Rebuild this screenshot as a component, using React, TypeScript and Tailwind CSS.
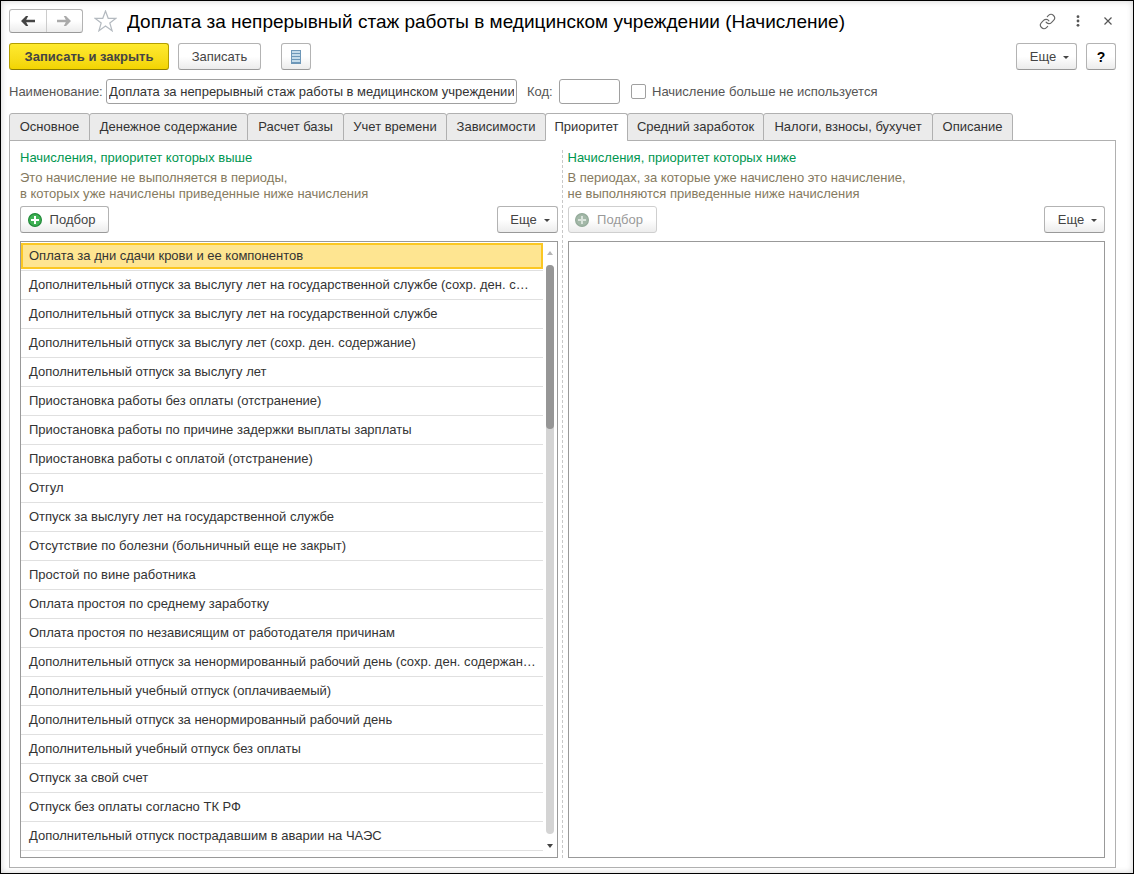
import { useState } from "react";
import type { ReactNode } from "react";
import clsx from "clsx";
import { Link } from "lucide-react";

const TABS = [
  { title: "Основное", width: "w-[81px]" },
  { title: "Денежное содержание", width: "w-[159px]" },
  { title: "Расчет базы", width: "w-[97px]" },
  { title: "Учет времени", width: "w-[104px]" },
  { title: "Зависимости", width: "w-[100px]" },
  { title: "Приоритет", width: "w-[83px]" },
  { title: "Средний заработок", width: "w-[137px]" },
  { title: "Налоги, взносы, бухучет", width: "w-[170px]" },
  { title: "Описание", width: "w-[81px]" },
];

const ACCRUALS = [
  "Оплата за дни сдачи крови и ее компонентов",
  "Дополнительный отпуск за выслугу лет на государственной службе (сохр. ден. с…",
  "Дополнительный отпуск за выслугу лет на государственной службе",
  "Дополнительный отпуск за выслугу лет (сохр. ден. содержание)",
  "Дополнительный отпуск за выслугу лет",
  "Приостановка работы без оплаты (отстранение)",
  "Приостановка работы по причине задержки выплаты зарплаты",
  "Приостановка работы с оплатой (отстранение)",
  "Отгул",
  "Отпуск за выслугу лет на государственной службе",
  "Отсутствие по болезни (больничный еще не закрыт)",
  "Простой по вине работника",
  "Оплата простоя по среднему заработку",
  "Оплата простоя по независящим от работодателя причинам",
  "Дополнительный отпуск за ненормированный рабочий день (сохр. ден. содержан…",
  "Дополнительный учебный отпуск (оплачиваемый)",
  "Дополнительный отпуск за ненормированный рабочий день",
  "Дополнительный учебный отпуск без оплаты",
  "Отпуск за свой счет",
  "Отпуск без оплаты согласно ТК РФ",
  "Дополнительный отпуск пострадавшим в аварии на ЧАЭС",
];

type ButtonProps = {
  children: ReactNode;
  className?: string;
  disabled?: boolean;
  label?: string;
};

function Button({ children, className, disabled, label }: ButtonProps) {
  return (
    <button
      type="button"
      disabled={disabled}
      aria-label={label}
      className={clsx(
        "flex h-[27px] shrink-0 items-center justify-center rounded-[3px] border bg-linear-to-b from-white from-50% to-[#ececec]",
        disabled
          ? "border-[#cfcfcf] text-[#999999]"
          : "border-[#b3b3b3] border-b-[#999999] text-[#444444]",
        className
      )}
    >
      {children}
    </button>
  );
}

function MoreButton() {
  return (
    <Button className="w-[61px] gap-[7px] pl-[6px]">
      Еще
      <svg width="6" height="3" viewBox="0 0 6 3" className="mt-[2px]" aria-hidden="true">
        <path d="M0 0h6L3 3z" fill="#444444" />
      </svg>
    </Button>
  );
}

function PickButton({ disabled }: { disabled?: boolean }) {
  return (
    <Button disabled={disabled} className="w-[89px] gap-2 pr-[6px]">
      <svg width="14" height="14" viewBox="0 0 14 14" aria-hidden="true">
        <circle
          cx="7"
          cy="7"
          r="6.4"
          fill={disabled ? "#a3b8a8" : "#3fb254"}
          stroke={disabled ? "#94ab9a" : "#238a3a"}
          strokeWidth="1.2"
        />
        <path d="M7 3v8M3 7h8" stroke={disabled ? "#d9e3db" : "#ffffff"} strokeWidth="2" />
      </svg>
      Подбор
    </Button>
  );
}

function ColumnHeader({ title, lines, disabled }: { title: string; lines: string[]; disabled?: boolean }) {
  return (
    <>
      <h2 className="leading-4 text-[#009650]">{title}</h2>
      <p className="mt-1 leading-4 text-[#857a60]">
        {lines.map((line) => (
          <span key={line} className="block">
            {line}
          </span>
        ))}
      </p>
      <div className="mt-1 mb-2 flex justify-between">
        <PickButton disabled={disabled} />
        <MoreButton />
      </div>
    </>
  );
}

/* Static scroll strip: arrow, track with thumb, arrow */
function ScrollStrip() {
  return (
    <div className="flex w-[14px] shrink-0 flex-col items-center py-[9px]">
      <svg width="6" height="4" viewBox="0 0 6 4" aria-hidden="true">
        <path d="M0 4h6L3 0z" fill="#b5b5b5" />
      </svg>
      <div className="my-[10px] w-2 flex-1 rounded-full bg-[#d4d4d4]">
        <div className="h-[164px] rounded-full bg-[#969696]" />
      </div>
      <svg width="6" height="4" viewBox="0 0 6 4" aria-hidden="true">
        <path d="M0 0h6L3 4z" fill="#444444" />
      </svg>
    </div>
  );
}

export default function App() {
  const [activeTab, setActiveTab] = useState("Приоритет");
  const [selected, setSelected] = useState(0);

  return (
    <main className="flex min-h-screen flex-col border border-black bg-white pt-2 pr-[17px] pb-[5px] pl-2 font-['Liberation_Sans',Arial,sans-serif] text-[13px] text-[#333333] shadow-[inset_0_0_6px_#00000030]">
      {/* Title bar */}
      <header className="flex h-6 items-center">
        <div className="flex h-6 w-[74px] shrink-0 rounded-[3px] border border-[#b3b3b3] border-b-[#999999] bg-linear-to-b from-white from-50% to-[#ececec]">
          <button type="button" aria-label="Назад" className="flex flex-1 items-center justify-center border-r border-[#cccccc]">
            <svg width="14" height="10" viewBox="0 0 14 10" fill="#444444" aria-hidden="true">
              <path d="M0 5L5 0h2.200L5.200 3.800H14v2.400H5.200L7.200 10H5z" />
            </svg>
          </button>
          <button type="button" aria-label="Вперед" className="flex flex-1 items-center justify-center">
            <svg width="14" height="10" viewBox="0 0 14 10" fill="#aaaaaa" aria-hidden="true">
              <path d="M14 5L9 0H6.800l2 3.800H0v2.400h8.800l-2 3.800H9z" />
            </svg>
          </button>
        </div>
        <button type="button" aria-label="В избранное" className="ml-[11px] shrink-0">
          <svg width="23" height="22" viewBox="0 0 23 22" fill="none" stroke="#b4bac0" strokeWidth="1.200" aria-hidden="true">
            <path d="M11.500 1l2.700 7.300h7.800l-6.200 4.700 2.300 7.800-6.600-4.700-6.600 4.700 2.300-7.800L1 8.300h7.800z" />
          </svg>
        </button>
        <h1 className="ml-[10px] flex-1 truncate pt-0.5 text-[19px] leading-6 text-black">
          Доплата за непрерывный стаж работы в медицинском учреждении (Начисление)
        </h1>
        <div className="flex shrink-0 items-center">
          <button type="button" aria-label="Ссылка">
            <Link size={17} strokeWidth={1.6} className="text-[#666666]" />
          </button>
          <button type="button" aria-label="Меню" className="ml-5">
            <svg width="4" height="12" viewBox="0 0 4 12" fill="#555555" aria-hidden="true">
              <circle cx="2" cy="1.700" r="1.400" />
              <circle cx="2" cy="6" r="1.400" />
              <circle cx="2" cy="10.300" r="1.400" />
            </svg>
          </button>
          <button type="button" aria-label="Закрыть" className="mr-1 ml-6">
            <svg width="8" height="8" viewBox="0 0 8 8" stroke="#555555" strokeWidth="1.200" aria-hidden="true">
              <path d="M.5.5l7 7M7.500.5l-7 7" />
            </svg>
          </button>
        </div>
      </header>

      {/* Command bar */}
      <div className="mt-[10px] flex items-center">
        <button
          type="button"
          className="h-[27px] w-40 rounded-[3px] border border-[#b39e00] border-b-[#8f7e00] bg-linear-to-b from-[#ffea2e] to-[#f2d400] font-bold text-[#444444]"
        >
          Записать и закрыть
        </button>
        <Button className="ml-[9px] w-[83px]">Записать</Button>
        <Button className="ml-5 w-[30px]" label="Список">
          <svg width="10" height="14" viewBox="0 0 10 14" aria-hidden="true">
            <path d="M0 0h10v14H0z" fill="#6d97b8" />
            <path d="M1 2h8M1 5h8M1 8h8M1 11h8" stroke="#c4dbea" strokeWidth="2" />
          </svg>
        </Button>
        <div className="ml-auto flex gap-[9px]">
          <MoreButton />
          <Button className="w-[30px] text-sm font-bold text-black">?</Button>
        </div>
      </div>

      {/* Attributes */}
      <div className="mt-[9px] flex items-center text-[#555555]">
        <label htmlFor="name" className="w-[97px] shrink-0">
          Наименование:
        </label>
        <input
          id="name"
          className="h-[25px] w-[411px] rounded-[3px] border border-[#a0a0a0] px-[2px] text-[#333333]"
          defaultValue="Доплата за непрерывный стаж работы в медицинском учреждении"
        />
        <label htmlFor="code" className="ml-[10px] w-8 shrink-0">
          Код:
        </label>
        <input id="code" className="h-[25px] w-[61px] rounded-[3px] border border-[#a0a0a0] px-[2px] text-[#333333]" />
        <input
          id="unused"
          type="checkbox"
          className="ml-[11px] size-[15px] shrink-0 appearance-none rounded-[2px] border border-[#a0a0a0] bg-white checked:bg-[#f2d400]"
        />
        <label htmlFor="unused" className="ml-[6px]">
          Начисление больше не используется
        </label>
      </div>

      {/* Tabs */}
      <div role="tablist" className="relative z-10 mt-[9px] flex">
        {TABS.map((tab) => (
          <button
            key={tab.title}
            type="button"
            role="tab"
            aria-selected={tab.title === activeTab}
            onClick={() => setActiveTab(tab.title)}
            className={clsx(
              "-mr-px h-7 rounded-t-[3px] border border-[#b0b0b0] text-center whitespace-nowrap",
              tab.width,
              tab.title === activeTab ? "border-b-white bg-white" : "bg-[#ebebeb]"
            )}
          >
            {tab.title}
          </button>
        ))}
      </div>

      <section className="-mt-px flex flex-1 border border-[#b0b0b0] px-[10px] pt-[9px] pb-[9px]">
        <div className="flex min-w-0 flex-1 flex-col">
          <ColumnHeader
            title="Начисления, приоритет которых выше"
            lines={["Это начисление не выполняется в периоды,", "в которых уже начислены приведенные ниже начисления"]}
          />
          <div className="flex flex-1 border border-[#999999]">
            <ul className="mb-[6px] min-w-0 flex-1">
              {ACCRUALS.map((name, i) => (
                <li key={name} className="border-b border-[#e0e0e0] py-px">
                  <button
                    type="button"
                    onClick={() => setSelected(i)}
                    className={clsx(
                      "block h-[26px] w-full truncate border-2 pl-[6px] text-left",
                      i === selected ? "border-[#fbc722] bg-[#fee591]" : "border-transparent"
                    )}
                  >
                    {name}
                  </button>
                </li>
              ))}
            </ul>
            <ScrollStrip />
          </div>
        </div>

        <div className="mr-[5px] ml-1 border-l border-dashed border-[#c8c8c8]" />

        <div className="flex min-w-0 flex-1 flex-col">
          <ColumnHeader
            disabled
            title="Начисления, приоритет которых ниже"
            lines={["В периодах, за которые уже начислено это начисление,", "не выполняются приведенные ниже начисления"]}
          />
          <div className="flex-1 border border-[#999999]" />
        </div>
      </section>
    </main>
  );
}
